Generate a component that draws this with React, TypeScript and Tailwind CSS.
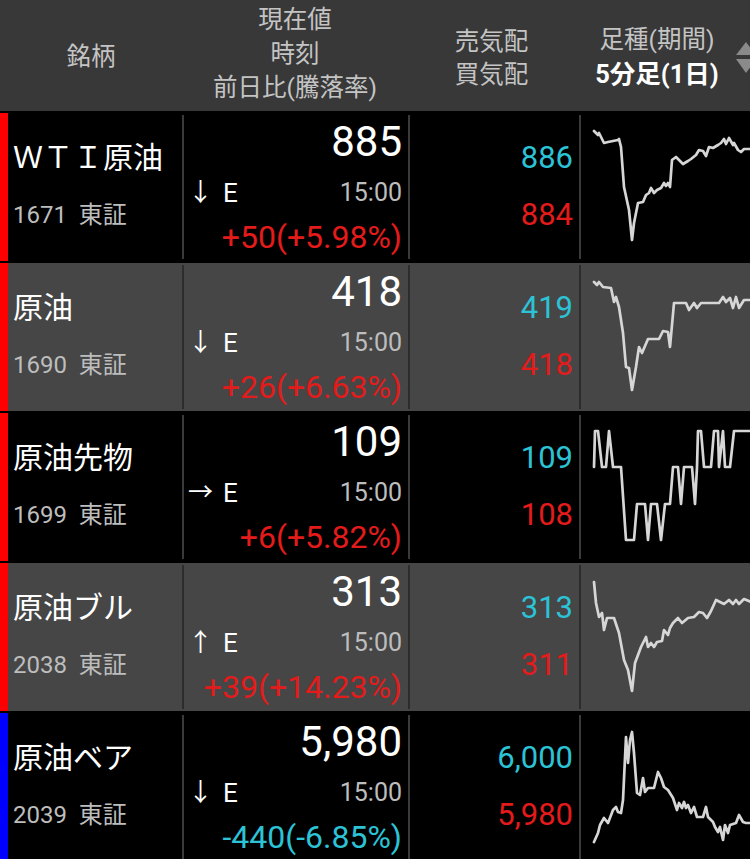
type Row = {
  name: string
  code: string
  price: string
  arrow: string
  time: string
  change: string
  up: boolean
  ask: string
  bid: string
  bar: string
  gray: boolean
  top: number
  pts: string
}

const rows: Row[] = [
  {
    name: 'ＷＴＩ原油', code: '1671', price: '885', arrow: '↓', time: '15:00', change: '+50(+5.98%)', up: true,
    ask: '886', bid: '884', bar: 'bg-[#ff0000]', gray: false, top: 113,
    pts: '593,131 597,135 598,133 603,143 607,142 617,140 618,139 620,147 623,187 628,210 631,240 633,223 637,203 642,202 645,195 648,193 650,188 653,193 656,190 660,188 663,183 665,186 667,183 669,187 671,160 675,157 682,164 687,161 690,159 695,155 698,150 702,151 705,156 708,147 712,148 717,145 720,143 723,139 725,144 728,138 732,145 733,143 737,150 740,152 743,149 750,149',
  },
  {
    name: '原油', code: '1690', price: '418', arrow: '↓', time: '15:00', change: '+26(+6.63%)', up: true,
    ask: '419', bid: '418', bar: 'bg-[#ff0000]', gray: true, top: 263,
    pts: '593,282 596,285 598,282 602,287 610,288 613,302 615,297 618,307 622,333 625,367 628,368 631,390 635,367 638,347 641,353 647,339 658,339 662,331 667,332 669,347 673,303 685,303 688,310 693,303 696,308 700,303 718,303 722,297 725,302 729,298 732,308 735,297 738,308 743,300 750,300',
  },
  {
    name: '原油先物', code: '1699', price: '109', arrow: '→', time: '15:00', change: '+6(+5.82%)', up: true,
    ask: '109', bid: '108', bar: 'bg-[#ff0000]', gray: false, top: 413,
    pts: '593,467 594,431 597,431 601,467 605,467 608,431 612,467 620,467 625,540 633,540 636,504 644,504 647,540 650,504 656,504 660,540 664,504 669,504 672,467 677,467 680,504 683,467 691,467 694,504 696,467 697,431 700,431 703,467 710,467 713,431 717,431 718,467 722,431 724,467 729,467 733,431 750,431',
  },
  {
    name: '原油ブル', code: '2038', price: '313', arrow: '↑', time: '15:00', change: '+39(+14.23%)', up: true,
    ask: '313', bid: '311', bar: 'bg-[#ff0000]', gray: true, top: 563,
    pts: '593,582 595,603 598,617 601,613 603,630 606,618 613,618 618,633 623,660 627,670 631,691 634,663 640,647 645,637 647,647 650,643 653,647 656,642 661,641 663,630 667,635 669,628 672,623 677,618 681,623 687,618 693,617 698,612 702,613 706,618 710,611 715,600 723,604 728,600 732,604 735,600 738,604 743,599 750,602',
  },
  {
    name: '原油ベア', code: '2039', price: '5,980', arrow: '↓', time: '15:00', change: '-440(-6.85%)', up: false,
    ask: '6,000', bid: '5,980', bar: 'bg-[#0000ff]', gray: false, top: 713,
    pts: '593,842 597,833 599,825 603,818 607,823 612,810 615,807 617,812 620,813 622,800 625,737 627,763 629,740 631,732 633,753 636,793 639,795 642,778 644,792 647,788 653,788 657,772 660,778 663,787 667,790 672,798 676,810 678,803 681,808 683,802 685,808 687,805 690,813 693,807 696,817 702,817 705,807 707,817 712,822 714,827 717,832 719,827 722,840 724,825 727,833 729,825 735,823 738,815 742,822 745,823 750,823',
  },
]

const font = { fontFamily: "Roboto, 'Noto Sans CJK JP', sans-serif" }

function QuoteRow({ r }: { r: Row }) {
  const sep = r.gray ? 'bg-[#2c2c2c]' : 'bg-[#3a3a3a]'
  return (
    <div className={`flex h-[148px] shrink-0 ${r.gray ? 'bg-[#464646]' : 'bg-black'}`}>
      <div className={`w-[8px] ${r.bar}`} />
      <div className="w-[174px] pl-[5px] flex flex-col">
        <div className="mt-[25px] text-[30px] leading-[40px] text-white whitespace-nowrap">{r.name}</div>
        <div className="mt-[22px] text-[24px] leading-[30px] text-[#bdbdbd] whitespace-nowrap">
          {r.code}&nbsp;&nbsp;東証
        </div>
      </div>
      <div className={`w-[2px] my-[2px] ${sep}`} />
      <div className="w-[224px] pl-[9px] pr-[6px] flex flex-col">
        <div className="mt-[7px] text-[42px] leading-[44px] text-white text-right">{r.price}</div>
        <div className="mt-[14px] flex items-center leading-[30px]">
          <span className="ml-[-5px] w-[35px] text-[25px] text-white">{r.arrow}</span>
          <span className="text-[26px] text-white">E</span>
          <span className="ml-auto text-[25px] text-[#bdbdbd]">{r.time}</span>
        </div>
        <div className={`mt-[12px] text-[32px] leading-[34px] text-right whitespace-nowrap ${r.up ? 'text-[#e41b1b]' : 'text-[#2cc3d6]'}`}>
          {r.change}
        </div>
      </div>
      <div className={`w-[2px] my-[2px] ${sep}`} />
      <div className="w-[169px] pr-[6px] flex flex-col items-end text-[31px] leading-[36px]">
        <div className="mt-[27px] text-[#2cc3d6]">{r.ask}</div>
        <div className="mt-[21px] text-[#e41b1b]">{r.bid}</div>
      </div>
      <div className={`w-[2px] my-[2px] ${sep}`} />
      <div className="flex-1 overflow-hidden">
        <svg width="170" height="148" viewBox={`580 ${r.top} 170 148`}>
          <polyline points={r.pts} fill="none" stroke="#d6d6d6" strokeWidth="2.7" strokeLinejoin="round" strokeLinecap="round" />
        </svg>
      </div>
    </div>
  )
}

export default function App() {
  return (
    <div className="w-[750px] h-[859px] overflow-hidden bg-black flex flex-col" style={font}>
      {/* header */}
      <div className="h-[111px] shrink-0 bg-[#383838] flex text-[24.5px] text-[#c4c4c4]">
        <div className="w-[182px] flex items-center justify-center pt-[4px]">銘柄</div>
        <div className="w-[226px] flex flex-col items-center pt-[3px] leading-[34px]">
          <div>現在値</div>
          <div>時刻</div>
          <div>前日比(騰落率)</div>
        </div>
        <div className="w-[171px] flex flex-col items-center pt-[25px] leading-[33px] pr-[4px]">
          <div>売気配</div>
          <div>買気配</div>
        </div>
        <div className="w-[156px] flex flex-col items-center pt-[23px] leading-[34px]">
          <div>足種(期間)</div>
          <div className="font-bold text-white text-[25.5px]">5分足(1日)</div>
        </div>
        <div className="flex-1 overflow-hidden flex items-center pt-[4px]">
          <svg width="22" height="34" viewBox="0 0 22 34" className="shrink-0">
            <polygon points="11,1 21,14 1,14" fill="#8a8a8a" />
            <polygon points="1,18 21,18 11,32" fill="#8a8a8a" />
          </svg>
        </div>
      </div>
      <div className="flex flex-col gap-[2px] mt-[2px]">
        {rows.map((r) => (
          <QuoteRow key={r.code} r={r} />
        ))}
      </div>
    </div>
  )
}
